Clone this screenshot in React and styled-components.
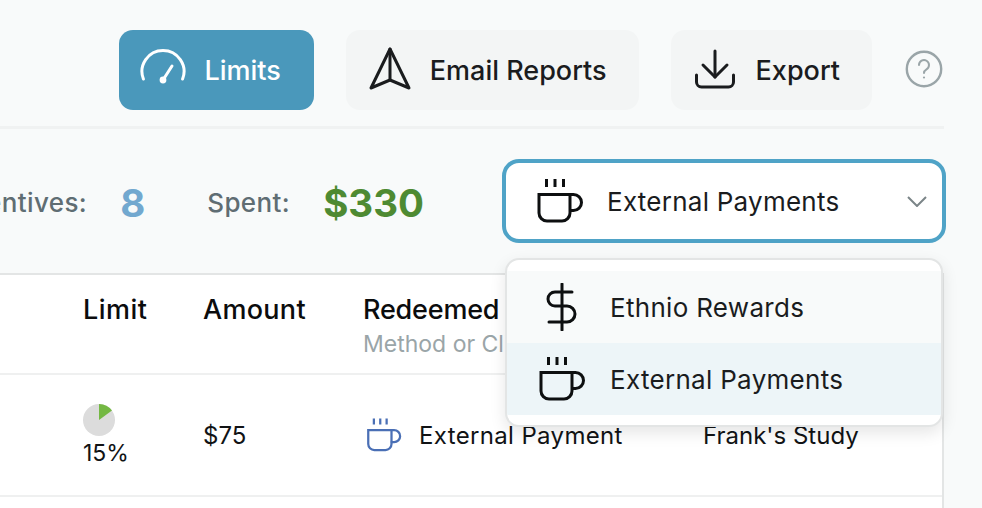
import React from 'react'
import styled, { createGlobalStyle } from 'styled-components'

const GlobalStyle = createGlobalStyle`
  html, body {
    margin: 0;
    height: 100%;
    background: #f8fafa;
    overflow: hidden;
  }
  body {
    font-family: Inter, "Liberation Sans", sans-serif;
    color: #1a1c1e;
  }
`

const Page = styled.div`
  width: 982px;
  height: 508px;
  overflow: hidden;
  display: flex;
  flex-direction: column;
  align-items: flex-end;
  padding-right: 38px;
  box-sizing: border-box;
`

const Header = styled.header`
  width: 944px;
  height: 129px;
  box-sizing: border-box;
  flex: none;
  border-bottom: 3px solid #f0f2f2;
  padding-top: 30px;
  display: flex;
  justify-content: flex-end;
  align-items: flex-start;
  gap: 32px;
`

const ActionButton = styled.button`
  height: 80px;
  box-sizing: border-box;
  border: none;
  border-radius: 14px;
  padding: 0 ${props => (props.$active ? 33 : 32)}px 0 20px;
  display: flex;
  align-items: center;
  gap: ${props => props.$gap || 16}px;
  background: ${props => (props.$active ? '#4a98bb' : '#f3f5f5')};
  color: ${props => (props.$active ? '#ffffff' : '#1a1c1e')};
  font-family: inherit;
  font-size: 27px;
  font-weight: 500;
`

const HelpIcon = styled.svg`
  width: 40px;
  height: 38px;
  margin-top: 20px;
  flex: none;
`

const StatsRow = styled.div`
  width: 944px;
  flex: none;
  height: 144px;
  display: flex;
  justify-content: flex-end;
  align-items: flex-start;
  padding-top: 30px;
  box-sizing: border-box;
  position: relative;
  z-index: 2;
`

const Stat = styled.div`
  display: flex;
  align-items: center;
  height: 84px;
  box-sizing: border-box;
  padding-top: 3px;
  gap: 33px;
  margin-right: ${props => props.$space}px;
  flex: none;
`

const StatLabel = styled.span`
  font-size: 26px;
  font-weight: 500;
  color: #5f6d73;
  white-space: nowrap;
  letter-spacing: 0.4px;
`

const StatValue = styled.span`
  font-size: 38.5px;
  font-weight: 700;
  color: ${props => props.$color};
`

const SelectWrap = styled.div`
  position: relative;
  width: 444px;
  flex: none;
  margin-right: -2px;
`

const SelectBox = styled.div`
  height: 84px;
  box-sizing: border-box;
  border: 4px solid #4fa3c7;
  border-radius: 17px;
  background: #ffffff;
  padding: 0 15px 0 30px;
  display: flex;
  align-items: center;
  gap: 23px;
  font-size: 26px;
  letter-spacing: 0.25px;
`

const OptionLabel = styled.span`
  flex: 1;
  white-space: nowrap;
`

const Menu = styled.div`
  position: absolute;
  top: 99px;
  left: 3px;
  width: 438px;
  box-sizing: border-box;
  background: #ffffff;
  border: 2px solid #e3e5e5;
  border-radius: 14px;
  padding: 11px 0 10px;
  box-shadow: 0 6px 16px rgba(0, 0, 0, 0.1);
  overflow: hidden;
`

const MenuItem = styled.div`
  height: 72px;
  display: flex;
  align-items: center;
  padding-left: 31px;
  gap: 24px;
  font-size: 26px;
  letter-spacing: 0.3px;
  background: ${props => (props.$selected ? '#edf5f8' : '#f8fafa')};
`

const Table = styled.div`
  width: 944px;
  flex: none;
  flex-grow: 1;
  box-sizing: border-box;
  background: #ffffff;
  border-top: 2px solid #e3e5e5;
  border-right: 2px solid #e3e5e5;
`

const TableRow = styled.div`
  display: grid;
  grid-template-columns: 120px 160px 340px 1fr;
  padding-left: 83px;
  align-items: ${props => (props.$head ? 'start' : 'center')};
  height: ${props => props.$height}px;
  box-sizing: border-box;
  border-bottom: 2px solid #eff0f0;
  padding-top: ${props => (props.$head ? 17 : 0)}px;
`

const HeadCell = styled.div`
  font-size: 27px;
  font-weight: 500;
  line-height: 36px;
  color: #0b0c0d;
  white-space: nowrap;
  letter-spacing: ${props => props.$spacing || 0}px;
`

const SubHead = styled.div`
  font-size: 23px;
  font-weight: 400;
  line-height: 32px;
  letter-spacing: 0;
  color: #9aa5a8;
`

const Cell = styled.div`
  font-size: 24px;
  color: #111315;
  white-space: nowrap;
  display: flex;
  align-items: center;
  gap: 17px;
  letter-spacing: ${props => props.$spacing || 0}px;
`

const CupSlot = styled.span`
  display: flex;
  margin-left: 3px;
`

const LimitCell = styled.div`
  display: flex;
  flex-direction: column;
  align-items: flex-start;
  font-size: 23px;
  line-height: 28px;
  color: #111315;
  gap: 3px;
`

const Pie = styled.svg`
  width: 32px;
  height: 32px;
  display: block;
`

const GaugeIcon = () => (
  <svg width="48" height="48" viewBox="0 0 48 48" fill="none" stroke="#fff" strokeWidth="3" strokeLinecap="round">
    <path d="M4.4 33 A21 21 0 1 1 43.6 33" />
    <path d="M24 34 L33 20" />
    <circle cx="24" cy="34" r="3.4" fill="#fff" stroke="none" />
  </svg>
)

const SendIcon = () => (
  <svg width="48" height="48" viewBox="0 0 48 48" fill="none" stroke="#1a1c1e" strokeWidth="3" strokeLinejoin="round" strokeLinecap="round">
    <path d="M24 3 L43 42 L24 34 L5 42 Z" />
    <path d="M24 3 V34" />
  </svg>
)

const DownloadIcon = () => (
  <svg width="48" height="48" viewBox="0 0 48 48" fill="none" stroke="#1a1c1e" strokeWidth="3" strokeLinecap="round" strokeLinejoin="round">
    <path d="M24 5 V31" />
    <path d="M12 19 L24 31 L36 19" />
    <path d="M5.5 29 V36 a5 5 0 0 0 5 5 H37.5 a5 5 0 0 0 5 -5 V29" />
  </svg>
)

const CupIcon = ({ size = 48, color = '#0d0f10' }) => (
  <svg width={size} height={size} viewBox="0 0 48 48" fill="none" stroke={color} strokeWidth="3" strokeLinecap="butt" style={{ flex: 'none' }}>
    <path d="M10.5 2 V10 M19 2 V10 M27.5 2 V10" />
    <path d="M3 17.5 H34 V36 a8 8 0 0 1 -8 8 H11 a8 8 0 0 1 -8 -8 Z" />
    <path d="M34 17.5 H37.5 a8 8 0 0 1 0 16 H33" />
  </svg>
)

const DollarIcon = () => (
  <svg width="48" height="48" viewBox="0 0 48 48" fill="none" stroke="#0d0f10" strokeWidth="3" strokeLinecap="round" style={{ flex: 'none' }}>
    <path d="M24 1 V47" />
    <path d="M34 9 H17 a7 7 0 0 0 0 14 H29 a8 8 0 0 1 0 16 H11" />
  </svg>
)

const Chevron = () => (
  <svg width="20" height="11" viewBox="0 0 20 11" fill="none" stroke="#7b8588" strokeWidth="2" style={{ flex: 'none' }}>
    <path d="M1 1 L10 10 L19 1" />
  </svg>
)

export default function App() {
  return (
    <Page>
      <GlobalStyle />
      <Header>
        <ActionButton $active $gap={17}>
          <GaugeIcon />
          Limits
        </ActionButton>
        <ActionButton>
          <SendIcon />
          Email Reports
        </ActionButton>
        <ActionButton $gap={17}>
          <DownloadIcon />
          Export
        </ActionButton>
        <HelpIcon viewBox="0 0 40 38" fill="none" stroke="#9aa5a8" strokeWidth="2.4">
          <circle cx="20" cy="19" r="17.2" />
          <path d="M15 15 a5 5 0 1 1 7.5 4.4 c-1.6 1 -2.5 2 -2.5 3.6" strokeWidth="2" strokeLinecap="round" />
          <circle cx="20" cy="27.5" r="1.1" fill="#9aa5a8" stroke="none" />
        </HelpIcon>
      </Header>
      <StatsRow>
        <Stat $space={62}>
          <StatLabel>Incentives:</StatLabel>
          <StatValue $color="#72a8cf">8</StatValue>
        </Stat>
        <Stat $space={78}>
          <StatLabel>Spent:</StatLabel>
          <StatValue $color="#4e8a32">$330</StatValue>
        </Stat>
        <SelectWrap>
          <SelectBox>
            <CupIcon />
            <OptionLabel>External Payments</OptionLabel>
            <Chevron />
          </SelectBox>
          <Menu>
            <MenuItem>
              <DollarIcon />
              Ethnio Rewards
            </MenuItem>
            <MenuItem $selected>
              <CupIcon />
              External Payments
            </MenuItem>
          </Menu>
        </SelectWrap>
      </StatsRow>
      <Table>
        <TableRow $head $height={100}>
          <HeadCell $spacing={0.5}>Limit</HeadCell>
          <HeadCell $spacing={0.3}>Amount</HeadCell>
          <HeadCell $spacing={-0.2}>
            Redeemed
            <SubHead>Method or Client</SubHead>
          </HeadCell>
        </TableRow>
        <TableRow $height={122}>
          <LimitCell>
            <Pie viewBox="0 0 32 32">
              <circle cx="16" cy="16" r="16" fill="#dcdcdc" />
              <path d="M16 16 V0 A16 16 0 0 1 29 6.6 Z" fill="#74b843" />
            </Pie>
            15%
          </LimitCell>
          <Cell>$75</Cell>
          <Cell $spacing={0.35}>
            <CupSlot>
              <CupIcon size={36} color="#4a6fb5" />
            </CupSlot>
            External Payment
          </Cell>
          <Cell>Frank's Study</Cell>
        </TableRow>
      </Table>
    </Page>
  )
}
